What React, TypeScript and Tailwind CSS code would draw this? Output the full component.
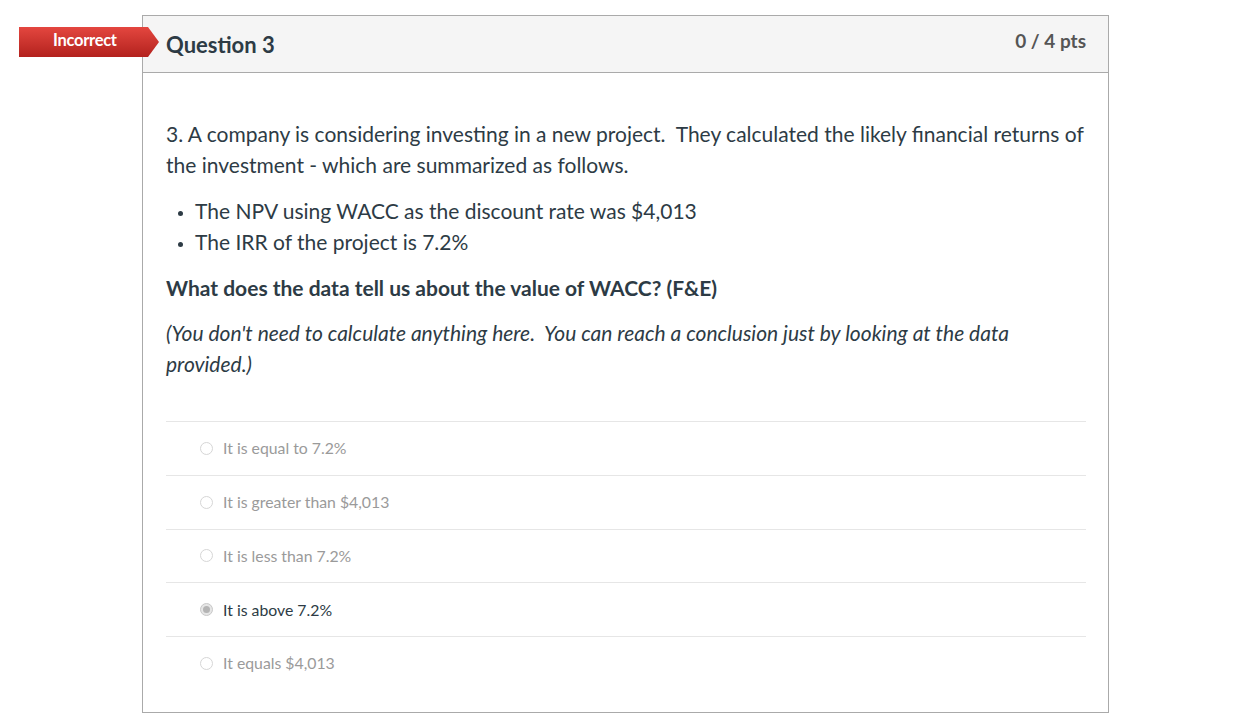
import React from 'react';

const answers = [
  { text: 'It is equal to 7.2%', selected: false },
  { text: 'It is greater than $4,013', selected: false },
  { text: 'It is less than 7.2%', selected: false },
  { text: 'It is above 7.2%', selected: true },
  { text: 'It equals $4,013', selected: false },
];

function Radio({ checked }: { checked: boolean }) {
  return (
    <span
      className={`w-[13px] h-[13px] rounded-full border flex items-center justify-center shrink-0 ${
        checked ? 'border-[#c8c8c8] bg-[#e6e6e6]' : 'border-[#d6d6d6] bg-white'
      }`}
    >
      {checked && <span className="w-[7px] h-[7px] rounded-full bg-[#b4b4b4]" />}
    </span>
  );
}

export default function App() {
  return (
    <div className="relative min-h-screen bg-white pl-[142px] pt-[15px] font-['Lato','Open_Sans',sans-serif] text-[#2d3b45]">
      {/* result ribbon, sits over the card edge */}
      <div className="absolute left-[19px] top-[27px] h-[30px] w-[140px] bg-gradient-to-b from-[#e4463f] to-[#b3211d] shadow-[0_1px_1px_rgba(0,0,0,0.35)] flex items-center pl-[34px] [clip-path:polygon(0_0,calc(100%-11px)_0,100%_50%,calc(100%-11px)_100%,0_100%)]">
        <span className="text-white font-bold text-[16.5px] leading-none tracking-[-0.3px] -mt-[3px]">Incorrect</span>
      </div>

      <div className="w-[967px] border border-[#aaaaaa]">
        {/* header */}
        <div className="h-[57px] bg-[#f5f5f5] border-b border-[#aaaaaa] flex justify-between pl-[23px] pr-[22px]">
          <h2 className="text-[22px] font-bold leading-none pt-[18px]">Question 3</h2>
          <span className="text-[19px] font-bold text-[#555] leading-none pt-[15px]">0 / 4 pts</span>
        </div>

        {/* body */}
        <div className="pl-[23px] pr-[22px] pt-[45px] pb-[22px] text-[21px] leading-[31px]">
          <p>
            3. A company is considering investing in a new project.&nbsp; They calculated the likely financial returns of the
            investment - which are summarized as follows.
          </p>
          <ul className="mt-[15px] list-disc pl-[29px] marker:text-[15px]">
            <li>The NPV using WACC as the discount rate was $4,013</li>
            <li>The IRR of the project is 7.2%</li>
          </ul>
          <p className="mt-[15px] font-bold">What does the data tell us about the value of WACC? (F&amp;E)</p>
          <p className="mt-[14px] italic">
            (You don't need to calculate anything here.&nbsp; You can reach a conclusion just by looking at the data
            provided.)
          </p>

          <div className="mt-[42px]">
            {answers.map((a) => (
              <div key={a.text} className="h-[53.75px] border-t border-[#e6e6e6] flex items-center pl-[34px] gap-[10px]">
                <Radio checked={a.selected} />
                <span className={`text-[15.8px] leading-none ${a.selected ? 'text-[#2d3b45]' : 'text-[#9a9a9a]'}`}>
                  {a.text}
                </span>
              </div>
            ))}
          </div>
        </div>
      </div>
    </div>
  );
}
